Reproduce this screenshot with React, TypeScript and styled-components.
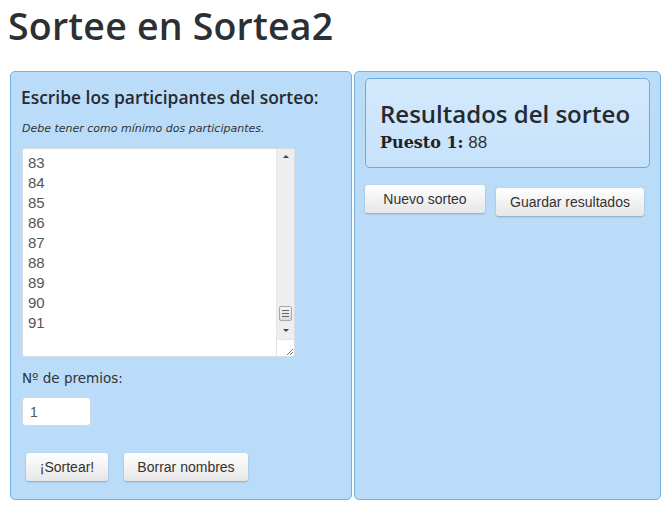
import React from 'react';
import styled, { createGlobalStyle } from 'styled-components';

const GlobalStyle = createGlobalStyle`
  html, body {
    margin: 0;
    padding: 0;
    background: #fff;
  }
  body {
    font-family: "Liberation Sans", Arial, sans-serif;
    color: #333;
  }
`;

const Page = styled.div`
  width: 666px;
  height: 508px;
  padding: 0 5px 0 10px;
  box-sizing: border-box;
`;

const Title = styled.h1`
  margin: 0 0 0 -2px;
  padding-top: 4px;
  height: 71px;
  box-sizing: border-box;
  font-family: "Open Sans", "DejaVu Sans", sans-serif;
  font-weight: 600;
  font-size: 37.5px;
  line-height: 44px;
  color: #2c2f33;
  letter-spacing: 0.2px;
`;

const Columns = styled.div`
  display: flex;
  gap: 2px;
  height: 429px;
`;

const Panel = styled.section<{ $width: number }>`
  width: ${(p) => p.$width}px;
  box-sizing: border-box;
  background: #bbdcf9;
  border: 1px solid #72b1e2;
  border-radius: 5px;
  padding: 10px;
  display: flex;
  flex-direction: column;
`;

const Heading = styled.h2`
  margin: 5px 0 0 0;
  font-family: "Open Sans", "DejaVu Sans", sans-serif;
  font-weight: 600;
  font-size: 17.4px;
  line-height: 20px;
  color: #262a30;
`;

const Hint = styled.p`
  margin: 15px 0 0 1px;
  font-family: "DejaVu Sans", sans-serif;
  font-style: italic;
  font-size: 11px;
  line-height: 14px;
  color: #333;
`;

const TextBox = styled.div`
  margin: 12px 0 0 1px;
  width: 273px;
  height: 209px;
  box-sizing: border-box;
  background: #fff;
  border: 1px solid #d8dde2;
  border-radius: 3px;
  display: flex;
  overflow: hidden;
`;

const Lines = styled.div`
  flex: 1;
  padding: 4px 0 0 5px;
  font-size: 15px;
  line-height: 20px;
  color: #555;
`;

const Scrollbar = styled.div`
  width: 17px;
  background: #eeeeee;
  border-left: 1px solid #e4e4e4;
  display: flex;
  flex-direction: column;
  align-items: center;
`;

const Arrow = styled.div<{ $down?: boolean }>`
  width: 0;
  height: 0;
  border-left: 3px solid transparent;
  border-right: 3px solid transparent;
  ${(p) =>
    p.$down
      ? 'border-top: 3px solid #444; margin-top: 8px;'
      : 'border-bottom: 3px solid #444; margin-top: 6px;'}
`;

const Thumb = styled.div`
  margin-top: auto;
  width: 13px;
  height: 15px;
  box-sizing: border-box;
  border: 1px solid #a8a8a8;
  border-radius: 2px;
  background: linear-gradient(#f4f4f4, #dcdcdc);
  display: flex;
  flex-direction: column;
  justify-content: center;
  gap: 2px;
  align-items: center;
  & > span {
    width: 7px;
    height: 1px;
    background: #666;
  }
`;

const Grip = styled.div`
  margin-top: 7px;
  width: 17px;
  height: 17px;
  background: #fff;
  border-top: 1px solid #e4e4e4;
  box-sizing: border-box;
  display: flex;
  align-items: flex-end;
  justify-content: flex-end;
`;

const Label = styled.div`
  margin: 13px 0 0 1px;
  font-family: "DejaVu Sans", sans-serif;
  font-size: 13.5px;
  color: #333;
`;

const NumberInput = styled.div`
  margin: 11px 0 0 1px;
  width: 69px;
  height: 29px;
  box-sizing: border-box;
  background: #fff;
  border: 1px solid #cfd8e0;
  border-radius: 4px;
  padding: 6px 0 0 7px;
  font-size: 14px;
  color: #555;
`;

const ButtonRow = styled.div<{ $top: number; $gap: number; $left: number }>`
  display: flex;
  align-items: flex-start;
  gap: ${(p) => p.$gap}px;
  margin-top: ${(p) => p.$top}px;
  margin-left: ${(p) => p.$left}px;
`;

const Button = styled.div<{ $width: number; $offset?: number }>`
  width: ${(p) => p.$width}px;
  height: 28px;
  margin-top: ${(p) => p.$offset || 0}px;
  box-sizing: border-box;
  background: linear-gradient(#ffffff, #e6e6e6);
  border-radius: 3px;
  box-shadow: 0 1px 2px rgba(0, 0, 0, 0.25);
  font-size: 14px;
  color: #333;
  display: flex;
  align-items: center;
  justify-content: center;
`;

const ResultBox = styled.div`
  margin: -4px 0 0 0;
  height: 90px;
  box-sizing: border-box;
  width: 285px;
  border: 1px solid #6ea9dd;
  border-radius: 5px;
  background: linear-gradient(#d3e9fd, #c6e2fb);
  padding: 20px 0 0 14px;
`;

const ResultTitle = styled.h3`
  margin: 0;
  font-family: "Open Sans", "DejaVu Sans", sans-serif;
  font-weight: 600;
  font-size: 24px;
  line-height: 30px;
  color: #262a30;
`;

const Place = styled.div`
  margin-top: 4px;
  font-family: "Liberation Sans", Arial, sans-serif;
  font-size: 17px;
  color: #333;
  & > b {
    font-family: "DejaVu Serif", Georgia, serif;
    font-size: 16px;
    color: #222;
  }
`;

const lines = ['83', '84', '85', '86', '87', '88', '89', '90', '91'];

export default function App() {
  return (
    <>
      <GlobalStyle />
      <Page>
        <Title>Sortee en Sortea2</Title>
        <Columns>
          <Panel $width={342}>
            <Heading>Escribe los participantes del sorteo:</Heading>
            <Hint>Debe tener como mínimo dos participantes.</Hint>
            <TextBox>
              <Lines>
                {lines.map((n) => (
                  <div key={n}>{n}</div>
                ))}
              </Lines>
              <Scrollbar>
                <Arrow />
                <Thumb>
                  <span />
                  <span />
                  <span />
                </Thumb>
                <Arrow $down />
                <Grip>
                  <svg width="9" height="9" viewBox="0 0 9 9">
                    <path d="M8 2 L2 8 M8 5 L5 8" stroke="#777" strokeWidth="1" />
                  </svg>
                </Grip>
              </Scrollbar>
            </TextBox>
            <Label>Nº de premios:</Label>
            <NumberInput>1</NumberInput>
            <ButtonRow $top={27} $gap={16} $left={5}>
              <Button $width={82}>¡Sortear!</Button>
              <Button $width={124}>Borrar nombres</Button>
            </ButtonRow>
          </Panel>
          <Panel $width={307}>
            <ResultBox>
              <ResultTitle>Resultados del sorteo</ResultTitle>
              <Place>
                <b>Puesto 1:</b> 88
              </Place>
            </ResultBox>
            <ButtonRow $top={17} $gap={11} $left={0}>
              <Button $width={120}>Nuevo sorteo</Button>
              <Button $width={148} $offset={3}>
                Guardar resultados
              </Button>
            </ButtonRow>
          </Panel>
        </Columns>
      </Page>
    </>
  );
}
